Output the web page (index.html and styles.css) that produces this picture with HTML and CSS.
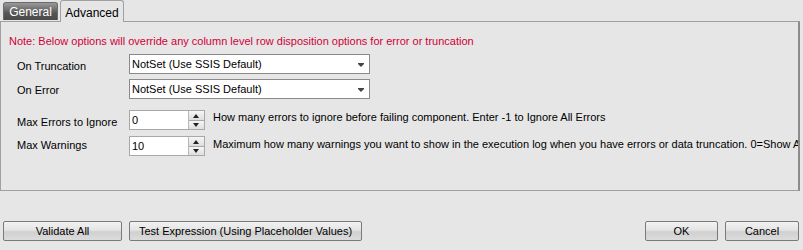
FILE: index.html
```html
<!DOCTYPE html>
<html>
<head>
<meta charset="utf-8">
<link rel="stylesheet" href="styles.css">
</head>
<body>
<div class="tabs">
  <div class="tab tab-general">General</div>
  <div class="tab tab-advanced">Advanced</div>
</div>
<div class="panel">
  <div class="note">Note: Below options will override any column level row disposition options for error or truncation</div>
  <div class="row row-combo first">
    <div class="label">On Truncation</div>
    <div class="combo"><span>NotSet (Use SSIS Default)</span><i class="arrow"></i></div>
  </div>
  <div class="row row-combo second">
    <div class="label">On Error</div>
    <div class="combo"><span>NotSet (Use SSIS Default)</span><i class="arrow"></i></div>
  </div>
  <div class="row row-spin spin-first">
    <div class="label">Max Errors to Ignore</div>
    <div class="spin"><span class="val">0</span><div class="btns"><b class="up"></b><b class="down"></b></div></div>
    <div class="hint">How many errors to ignore before failing component. Enter -1 to Ignore All Errors</div>
  </div>
  <div class="row row-spin spin-second">
    <div class="label">Max Warnings</div>
    <div class="spin"><span class="val">10</span><div class="btns"><b class="up"></b><b class="down"></b></div></div>
    <div class="hint">Maximum how many warnings you want to show in the execution log when you have errors or data truncation. 0=Show All</div>
  </div>
</div>
<div class="footer">
  <button class="btn btn-validate">Validate All</button>
  <button class="btn btn-test">Test Expression (Using Placeholder Values)</button>
  <div class="spacer"></div>
  <button class="btn btn-ok">OK</button>
  <button class="btn btn-cancel">Cancel</button>
</div>
</body>
</html>
```

FILE: styles.css
```css
html, body {
  margin: 0;
  padding: 0;
  background: #e6e6e6;
  font-family: "Liberation Sans", Arial, sans-serif;
  font-size: 11px;
  color: #000;
  width: 803px;
  height: 250px;
  overflow: hidden;
}
.tabs {
  display: flex;
  align-items: flex-end;
  height: 21px;
  padding-left: 3px;
  gap: 2px;
}
.tab {
  box-sizing: border-box;
  border-radius: 3px 3px 0 0;
  display: flex;
  align-items: center;
  justify-content: center;
  font-size: 12px;
}
.tab-general {
  width: 55px;
  height: 18px;
  margin-bottom: 1px;
  color: #fff;
  background: linear-gradient(#9a9a9a, #555 60%, #4a4a4a);
  border: 1px solid #6a6a6a;
  border-bottom: none;
}
.tab-advanced {
  width: 64px;
  height: 22px;
  margin-bottom: -1px;
  position: relative;
  z-index: 1;
  background: #e6e6e6;
  border: 1px solid #a0a0a0;
  border-bottom: none;
  padding-top: 2px;
}
.panel {
  box-sizing: border-box;
  width: 800px;
  height: 170px;
  border: 1px solid #a0a0a0;
  border-right: 2px solid #8c8c8c;
  overflow: hidden;
  padding: 13px 0 0 8px;
}
.note {
  color: #d0003a;
  white-space: nowrap;
  height: 14px;
}
.row {
  display: flex;
  align-items: flex-start;
  padding-left: 8px;
}
.label {
  width: 112px;
  flex: none;
  white-space: nowrap;
}
.row-combo.first { margin-top: 5px; }
.row-combo { margin-bottom: 5px; }
.row-combo.first .label { padding-top: 6px; }
.row-combo.second .label { padding-top: 5px; }
.combo {
  box-sizing: border-box;
  width: 241px;
  height: 20px;
  background: #fff;
  border: 1px solid #8a8a8a;
  display: flex;
  align-items: center;
  padding-left: 2px;
  position: relative;
}
.arrow {
  position: absolute;
  right: 5px;
  top: 9px;
  width: 0;
  height: 0;
  border-left: 3px solid transparent;
  border-right: 3px solid transparent;
  border-top: 3px solid #444;
}
.arrow::before {
  content: "";
  position: absolute;
  left: -3px;
  top: -4px;
  width: 6px;
  height: 1px;
  background: #444;
}
.spin-first { margin-top: 11px; }
.row-spin { margin-bottom: 6px; }
.spin-first .label { padding-top: 6px; }
.spin-second .label { padding-top: 3px; }
.spin {
  box-sizing: border-box;
  width: 76px;
  height: 20px;
  background: #fff;
  border: 1px solid #a8a8a8;
  display: flex;
  flex: none;
}
.val {
  flex: 1;
  padding: 3px 0 0 2px;
}
.btns {
  width: 15px;
  display: flex;
  flex-direction: column;
  border-left: 1px solid #b8b8b8;
  background: #e8e8e8;
}
.btns b {
  flex: 1;
  position: relative;
  background: linear-gradient(#f6f6f6, #dedede);
}
.btns b.up { border-bottom: 1px solid #a8a8a8; }
.btns b::after {
  content: "";
  position: absolute;
  left: 4px;
  width: 0;
  height: 0;
  border-left: 3px solid transparent;
  border-right: 3px solid transparent;
}
.btns b.up::after { top: 3px; border-bottom: 4px solid #222; }
.btns b.down::after { top: 2px; border-top: 4px solid #222; }
.hint {
  padding: 1px 0 0 8px;
  white-space: nowrap;
}
.spin-second .hint { padding-top: 2px; }
.footer {
  display: flex;
  align-items: flex-start;
  padding: 30px 4px 0 3px;
  gap: 7px;
}
.spacer { flex: 1; }
.btn {
  box-sizing: border-box;
  height: 20px;
  font-family: inherit;
  font-size: 11px;
  color: #000;
  white-space: nowrap;
  border: 1px solid #7a7a7a;
  border-radius: 2px;
  background: linear-gradient(#f2f2f2, #e4e4e4 45%, #d0d0d0 55%, #dcdcdc);
  padding: 0;
}
.btn-validate { width: 119px; }
.btn-test { width: 233px; }
.btn-ok { width: 73px; }
.btn-cancel { width: 74px; }
```
